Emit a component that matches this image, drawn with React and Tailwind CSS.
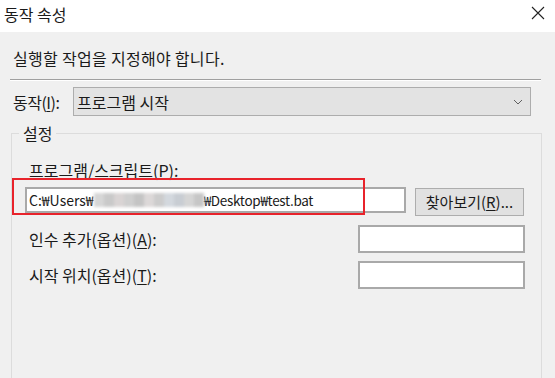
import React from 'react';

const font = { fontFamily: '"Noto Sans CJK KR", "Noto Sans", sans-serif' };

const blurColors = ['#d6d6d6', '#c9c9c9', '#d9d4d4', '#cfcfcf', '#c4c4c4', '#dcd8d8', '#cccccc', '#d3d8de', '#c8cdd3', '#d5d5d5', '#c6c6c6'];

const Mnemonic = ({ children }) => <span className="underline underline-offset-2">{children}</span>;

const TextBox = ({ className = '', children }) => (
  <div className={`bg-white border-2 border-[#a9a9a9] ${className}`}>{children}</div>
);

const App = () => {
  return (
    <div className="w-[555px] h-[378px] flex flex-col overflow-hidden text-[#1a1a1a]" style={font}>
      {/* title bar */}
      <div className="h-[32px] bg-white flex items-start justify-between pl-[4px] pr-[10px] pt-[4px]">
        <span className="text-[16px] leading-5">동작 속성</span>
        <svg width="14" height="14" viewBox="0 0 14 14" className="mt-[2px]">
          <path d="M1 1 L13 13 M13 1 L1 13" stroke="#222" strokeWidth="1.1" />
        </svg>
      </div>

      <div className="flex-1 bg-[#f0f0f0] flex flex-col pt-[16px]">
        <p className="ml-[13px] text-[16px] leading-5 tracking-[0.3px]">실행할 작업을 지정해야 합니다.</p>

        <div className="ml-[10px] w-[531px] mt-[11px] border-t border-[#a0a0a0] border-b border-b-white" />

        <div className="mt-[6px] flex items-center h-[29px]">
          <span className="ml-[13px] w-[60px] text-[16px] leading-5 tracking-[-0.5px]">
            동작(<Mnemonic>I</Mnemonic>):
          </span>
          <div className="w-[458px] h-[29px] bg-[#e3e3e3] border border-[#adadad] flex items-center justify-between pl-[3px] pr-[7px]">
            <span className="text-[16px] leading-5">프로그램 시작</span>
            <svg width="10" height="6" viewBox="0 0 10 6">
              <path d="M1 1 L5 5 L9 1" fill="none" stroke="#606060" strokeWidth="1" />
            </svg>
          </div>
        </div>

        {/* group box */}
        <div className="relative mt-[17px] ml-[11px] w-[531px] flex-1 border border-b-0 border-[#dcdcdc] pl-[13px] pt-[26px]">
          <span className="absolute -top-[11px] left-[7px] px-[4px] bg-[#f0f0f0] text-[16px] leading-5">설정</span>

          <p className="ml-[4px] text-[16px] leading-5">
            프로그램/스크립트(<Mnemonic>P</Mnemonic>):
          </p>

          <div className="mt-[7px] flex items-start">
            <TextBox className="w-[381px] h-[26px] flex items-center pl-[2px]">
              <span className="text-[14px] leading-5">C:₩Users₩</span>
              <div className="flex h-[14px] blur-[1.5px]">
                {blurColors.map((c, i) => (
                  <div key={i} className="w-[10px] h-[14px]" style={{ backgroundColor: c }} />
                ))}
              </div>
              <span className="text-[13.5px] leading-5 tracking-[-0.3px]">₩Desktop₩test.bat</span>
            </TextBox>
            <button className="ml-[9px] mt-[1px] w-[109px] h-[28px] bg-[#e1e1e1] border border-[#adadad] text-[15px] leading-5">
              찾아보기(<Mnemonic>R</Mnemonic>)...
            </button>
          </div>

          <div className="mt-[9px] flex items-center">
            <span className="w-[333px] pl-[4px] text-[16px] leading-5">
              인수 추가(옵션)(<Mnemonic>A</Mnemonic>):
            </span>
            <TextBox className="w-[167px] h-[28px]" />
          </div>

          <div className="mt-[8px] flex items-center">
            <span className="w-[333px] pl-[4px] text-[16px] leading-5">
              시작 위치(옵션)(<Mnemonic>T</Mnemonic>):
            </span>
            <TextBox className="w-[167px] h-[28px]" />
          </div>

          {/* highlight box */}
          <div className="absolute left-0 top-[44px] w-[353px] h-[37px] border-2 border-[#e8232b]" />
        </div>
      </div>
    </div>
  );
};

export default App;
